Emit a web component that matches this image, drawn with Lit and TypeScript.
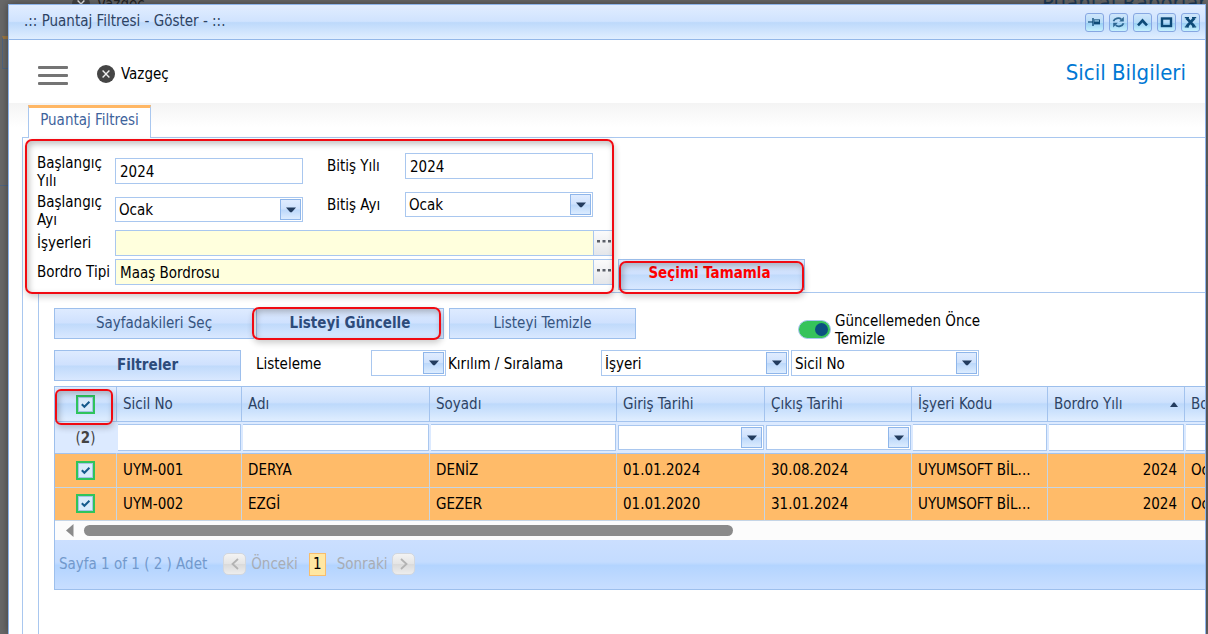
import { LitElement, html, css, svg, nothing } from "lit";
import { customElement, property, state } from "lit/decorators.js";

const controlStyles = css`
  * {
    box-sizing: border-box;
  }
  button,
  input,
  select {
    font: inherit;
    color: inherit;
    margin: 0;
    border-radius: 0;
  }
  input,
  select {
    border: 1px solid #a9c7ef;
    background: #fff;
    padding: 1px 4px 0;
    outline: none;
  }
`;

/** Drop-down list with a square arrow button at its right end. */
@customElement("drop-down")
class DropDown extends LitElement {
  @property() label = "";
  @property() value = "";

  static styles = [
    controlStyles,
    css`
      :host {
        display: block;
        position: relative;
        height: 26px;
      }
      select {
        appearance: none;
        display: block;
        width: 100%;
        height: 100%;
        padding: 1px 24px 0 3px;
      }
      .arrow {
        position: absolute;
        top: 2px;
        right: 2px;
        bottom: 2px;
        width: 21px;
        border: 1px solid #8fb6ea;
        background: linear-gradient(#e0ecff, #cfe2fd 48%, #bcd8fa 52%, #dcecff);
        display: grid;
        place-items: center;
        pointer-events: none;
      }
    `,
  ];

  render() {
    return html`
      <select aria-label=${this.label}>
        <option>${this.value}</option>
      </select>
      <span class="arrow">
        <svg width="10" height="6" viewBox="0 0 10 6">
          <path d="M0 .5H10L5.8 5.2H4.2Z" fill="#233c5e" />
        </svg>
      </span>
    `;
  }
}

interface Column {
  key: string;
  title: string;
  width: number;
  filter?: "text" | "date";
  numeric?: boolean;
  sorted?: boolean;
}

const COLUMNS: Column[] = [
  { key: "no", title: "Sicil No", width: 125 },
  { key: "name", title: "Adı", width: 188 },
  { key: "surname", title: "Soyadı", width: 187 },
  { key: "start", title: "Giriş Tarihi", width: 148, filter: "date" },
  { key: "end", title: "Çıkış Tarihi", width: 147, filter: "date" },
  { key: "place", title: "İşyeri Kodu", width: 136 },
  { key: "year", title: "Bordro Yılı", width: 137, numeric: true, sorted: true },
  { key: "month", title: "Bordro Ayı", width: 136 },
];

const ROWS: Record<string, string>[] = [
  { no: "UYM-001", name: "DERYA", surname: "DENİZ", start: "01.01.2024", end: "30.08.2024", place: "UYUMSOFT BİL...", year: "2024", month: "Ocak" },
  { no: "UYM-002", name: "EZGİ", surname: "GEZER", start: "01.01.2020", end: "31.01.2024", place: "UYUMSOFT BİL...", year: "2024", month: "Ocak" },
];

/** Employee list with a filter row, a scroll bar and a pager. */
@customElement("record-grid")
class RecordGrid extends LitElement {
  @state() private selected = new Set(ROWS.map((r) => r.no));

  static styles = [
    controlStyles,
    css`
      :host {
        display: block;
        border: 1px solid #9dbfec;
        border-right: 0;
        overflow: hidden;
      }
      table {
        table-layout: fixed;
        width: 1266px;
        border-spacing: 0;
      }
      th,
      td {
        padding: 0 6px;
        font-weight: normal;
        text-align: left;
        white-space: nowrap;
        overflow: hidden;
        border-right: 1px solid #a3c3ee;
        border-bottom: 1px solid #a3c3ee;
      }
      .head th {
        height: 35px;
        color: #2d4363;
        background: linear-gradient(#e1edff, #cde1fd 45%, #bdd9fb 50%, #e0eeff);
      }
      .head th.pick {
        position: relative;
        overflow: visible;
      }
      .title {
        display: flex;
        align-items: center;
        justify-content: space-between;
      }
      .filters td {
        height: 32px;
        padding: 0;
        background: #dceaff;
        border-right-color: #dceaff;
      }
      .filters input {
        display: block;
        width: calc(100% - 1px);
        margin-left: 1px;
        height: 27px;
        border-left: 0;
      }
      .filters drop-down {
        margin-left: 1px;
        height: 25px;
      }
      .filters td.count {
        text-align: center;
        color: #444;
      }
      .rows td {
        height: 33px;
        padding-bottom: 1px;
        background: #ffbb69;
        border-color: #c5d5e6;
      }
      .rows tr:first-child td {
        height: 34px;
      }
      .pick {
        text-align: center;
      }
      .rows .numeric {
        padding-right: 7px;
        text-align: right;
      }
      .check {
        appearance: none;
        display: inline-block;
        vertical-align: middle;
        width: 19px;
        height: 19px;
        padding: 0;
        border: 2px solid #2fc45c;
        background: #e3f1ff;
      }
      .check:checked {
        background: #e3f1ff
          url("data:image/svg+xml,%3Csvg xmlns='http://www.w3.org/2000/svg' viewBox='0 0 15 15'%3E%3Crect x='.5' y='.5' width='14' height='14' fill='%23d9ebfb' stroke='%23a3c4e4'/%3E%3Cpath d='M3.800 7.200L6.400 9.800L11.400 4.800' fill='none' stroke='%23155a8c' stroke-width='2'/%3E%3C/svg%3E")
          center / 15px 15px;
      }
      .mark {
        position: absolute;
        inset: 2px 3px -4px 0;
        border: 2px solid #f00a12;
        border-radius: 6px;
        box-shadow: 1px 3px 6px rgba(0, 0, 0, 0.2), inset 2px 3px 6px rgba(0, 0, 0, 0.25);
        pointer-events: none;
      }
      .scroll {
        display: flex;
        align-items: center;
        gap: 10px;
        height: 19px;
        padding-left: 11px;
        background: #fcfcfc;
      }
      .thumb {
        width: 57%;
        height: 11px;
        border-radius: 6px;
        background: #8b8b8b;
      }
      .pager {
        display: flex;
        align-items: center;
        height: 49px;
        padding: 0 4px 1px;
        color: #7299cc;
        background: linear-gradient(#cbdfff, #c4dcff 45%, #b3d4ff 52%, #c8deff);
      }
      .nav {
        display: flex;
        align-items: center;
        gap: 5px;
        padding: 0;
        border: 0;
        background: none;
        color: #a8adb5;
      }
      .prev {
        margin-left: 16px;
      }
      .chip {
        width: 23px;
        height: 22px;
        border: 1px solid #d3d7dd;
        border-radius: 5px;
        background: linear-gradient(#f3f3f3, #e4e4e4 50%, #dadada 52%, #ededed);
        display: grid;
        place-items: center;
      }
      .page {
        margin: 0 11px;
        width: 17px;
        height: 23px;
        border: 1px solid #f8bd6c;
        background: #ffe7a2;
        color: #000;
        line-height: 21px;
        text-align: center;
      }
    `,
  ];

  private toggleAll(e: Event) {
    const on = (e.target as HTMLInputElement).checked;
    this.selected = new Set(on ? ROWS.map((r) => r.no) : []);
  }

  private toggle(no: string) {
    const next = new Set(this.selected);
    next.has(no) ? next.delete(no) : next.add(no);
    this.selected = next;
  }

  render() {
    return html`
      <table>
        <colgroup>
          <col style="width:62px" />
          ${COLUMNS.map((c) => html`<col style="width:${c.width}px" />`)}
        </colgroup>
        <thead>
          <tr class="head">
            <th class="pick">
              <input class="check" type="checkbox" aria-label="Tümünü seç"
                .checked=${this.selected.size === ROWS.length} @change=${this.toggleAll} />
              <span class="mark"></span>
            </th>
            ${COLUMNS.map(
              (c) => html`<th scope="col">
                <span class="title">${c.title}
                  ${c.sorted
                    ? html`<svg width="8" height="5" viewBox="0 0 8 5"><path d="M0 5H8L4.6 .5H3.4Z" fill="#233c5e" /></svg>`
                    : nothing}
                </span>
              </th>`
            )}
          </tr>
          <tr class="filters">
            <td class="count">(<b>${this.selected.size}</b>)</td>
            ${COLUMNS.map(
              (c) => html`<td>
                ${c.filter === "date"
                  ? html`<drop-down .label=${c.title}></drop-down>`
                  : html`<input type="text" aria-label=${c.title} />`}
              </td>`
            )}
          </tr>
        </thead>
        <tbody class="rows">
          ${ROWS.map(
            (r) => html`<tr>
              <td class="pick">
                <input class="check" type="checkbox" aria-label=${r.no}
                  .checked=${this.selected.has(r.no)} @change=${() => this.toggle(r.no)} />
              </td>
              ${COLUMNS.map((c) => html`<td class=${c.numeric ? "numeric" : ""}>${r[c.key]}</td>`)}
            </tr>`
          )}
        </tbody>
      </table>
      <div class="scroll">
        <svg width="8" height="13" viewBox="0 0 8 13"><path d="M7.5 0V13L0 6.5Z" fill="#8b8b8b" /></svg>
        <span class="thumb"></span>
      </div>
      <div class="pager">
        <span>Sayfa 1 of 1 ( 2 ) Adet</span>
        <button class="nav prev" type="button">
          <span class="chip"><svg width="8" height="12" viewBox="0 0 8 12"><path d="M7 1L1.5 6L7 11" fill="none" stroke="#b3b3b3" stroke-width="1.8" /></svg></span>
          Önceki
        </button>
        <span class="page">1</span>
        <button class="nav" type="button">
          Sonraki
          <span class="chip"><svg width="8" height="12" viewBox="0 0 8 12"><path d="M1 1L6.5 6L1 11" fill="none" stroke="#b3b3b3" stroke-width="1.8" /></svg></span>
        </button>
      </div>
    `;
  }
}

const closeBadge = (size: number) => svg`
  <svg width=${size} height=${size} viewBox="0 0 18 18">
    <circle cx="9" cy="9" r="9" fill="#454545" />
    <path d="M5.6 5.6L12.4 12.4M12.4 5.6L5.6 12.4" stroke="#eee" stroke-width="1.4" />
  </svg>`;

const WINDOW_TOOLS = [
  {
    name: "Sabitle",
    icon: svg`<path d="M0 6H5" stroke="#0d4a77" stroke-width="1.2" fill="none"/><path d="M5 2V10" stroke="#0d4a77" stroke-width="1.4"/><path d="M6 3.4H12V8.4H6Z" fill="#0d4a77"/><path d="M6.400 4.900H11" stroke="#a9d8f4" stroke-width="1.200"/>`,
  },
  {
    name: "Yenile",
    icon: svg`<path d="M1.500 5.200C2.500 2.200 7 1 9.300 3.300M11.500 7.200C10.500 10.200 6 11.400 3.700 9.100" stroke="#2d6792" stroke-width="1.800" fill="none"/><path d="M11.800 .8V5.600H7.200ZM1.200 11.600V6.800H5.800Z" fill="#2d6792"/>`,
  },
  {
    name: "Daralt",
    icon: svg`<path d="M2 9.300L6.500 4.500L11 9.300" stroke="#0d4a77" stroke-width="2.600" fill="none"/>`,
  },
  {
    name: "Büyüt",
    icon: svg`<rect x="2" y="2.500" width="9" height="7.500" stroke="#0d4a77" stroke-width="2.400" fill="none"/>`,
  },
  {
    name: "Kapat",
    icon: svg`<path d="M2.500 2L10.500 10.500M10.500 2L2.500 10.500" stroke="#0d4a77" stroke-width="2.600" fill="none"/><path d="M.8 1.600H5M8 1.600H12.200M.8 10.900H5M8 10.900H12.200" stroke="#0d4a77" stroke-width="1.200"/>`,
  },
];

@customElement("app-root")
class AppRoot extends LitElement {
  static styles = [
    controlStyles,
    css`
      :host {
        display: block;
        position: relative;
        min-height: 100vh;
        overflow: hidden;
        background: #686868;
        color: #000;
        font-family: "DejaVu Sans Condensed", "Noto Sans", sans-serif;
        font-size: 15px;
        line-height: 18px;
      }
      .behind {
        position: absolute;
        inset: 0;
        color: #242424;
      }
      .behind-close {
        position: absolute;
        left: 72px;
        top: -5px;
        display: flex;
        gap: 7px;
      }
      .behind-title {
        position: absolute;
        left: 1042px;
        top: -10px;
        font-size: 22px;
        line-height: 26px;
        color: #1f3b57;
        white-space: nowrap;
      }
      .behind-tab {
        position: absolute;
        left: 2px;
        top: 36px;
        width: 40px;
        height: 33px;
        border: 1px solid #50647e;
        border-top: 3px solid #9b7743;
      }
      .behind-line {
        position: absolute;
        left: 0;
        top: 185px;
        width: 100%;
        border-top: 1px solid #50647e;
      }
      .window {
        position: relative;
        margin: 4px 2px 0 8px;
        min-height: calc(100vh - 4px);
        border: 1px solid #8db4ea;
        border-bottom: 0;
        background: #fff;
        box-shadow: 0 0 8px rgba(0, 0, 0, 0.4);
        overflow: hidden;
      }
      .titlebar {
        display: flex;
        align-items: center;
        justify-content: space-between;
        height: 35px;
        padding: 0 5px 0 15px;
        border-bottom: 1px solid #93b7e8;
        color: #2d4363;
        background: linear-gradient(#e1edff, #d0e3fe 48%, #bdd9fb 52%, #e0eeff);
      }
      .title {
        margin: 0;
        padding-bottom: 2px;
        font-size: 15px;
        font-weight: normal;
      }
      .tools {
        display: flex;
        gap: 5px;
      }
      .tool {
        width: 19px;
        height: 19px;
        padding: 0;
        border: 1px solid #86a7e2;
        border-radius: 3px;
        background: linear-gradient(#cfe6fb, #b5dbf8 50%, #9bd0f5 55%, #c6f1fd);
        display: grid;
        place-items: center;
      }
      .commands {
        display: flex;
        align-items: center;
        height: 63px;
        padding: 4px 19px 0 29px;
      }
      .menu,
      .cancel {
        padding: 0;
        border: 0;
        background: none;
        display: flex;
        align-items: center;
        gap: 6px;
      }
      .menu {
        flex-direction: column;
        gap: 5px;
        margin: 4px 29px 0 0;
      }
      .menu i {
        width: 30px;
        height: 3px;
        border-radius: 1px;
        background: #747474;
      }
      .heading {
        margin: 0 0 0 auto;
        padding-bottom: 2px;
        font-size: 22px;
        line-height: 28px;
        font-weight: normal;
        color: #0078d4;
      }
      .strip {
        height: 34px;
        padding: 2px 0 0 19px;
        background: linear-gradient(#f4f4f4, #fff 24px);
      }
      .tab {
        display: block;
        position: relative;
        width: 123px;
        height: 33px;
        padding: 0 0 6px;
        border: 1px solid #a9c7ef;
        border-top: 3px solid #ffb765;
        border-bottom: 0;
        background: #fff;
        color: #3e639c;
      }
      .panel {
        margin-left: 13px;
        border: 1px solid #a9c7ef;
        border-width: 1px 0 0 1px;
        min-height: calc(100vh - 137px);
      }
      .form {
        position: relative;
        display: grid;
        grid-template-columns: 78px 188px 24px 78px 188px 21px auto;
        grid-template-rows: 39px 38px 29px 31px;
        width: max-content;
        padding: 15px 0 2px 14px;
        align-items: start;
      }
      .form input {
        width: 100%;
        height: 26px;
      }
      .form drop-down {
        height: 25px;
      }
      .form label {
        line-height: 26px;
        white-space: nowrap;
      }
      .form .first {
        grid-column: 1;
      }
      .form .tall {
        line-height: 18px;
        white-space: normal;
        padding: 1px 8px 0 0;
      }
      .form .low {
        margin-top: 5px;
      }
      .second {
        grid-column: 4;
      }
      .lookup {
        grid-column: 2 / 7;
        display: flex;
        height: 26px;
      }
      .lookup input {
        flex: 1;
        min-width: 0;
        background: #ffffdd;
      }
      .more {
        width: 20px;
        padding: 0;
        border: 1px solid #a9c7ef;
        border-left: 0;
        background: linear-gradient(#fbfbfb, #e4e6ea);
        display: grid;
        place-items: center;
      }
      .action {
        height: 31px;
        width: 187px;
        padding: 0 0 1px;
        border: 1px solid #9dbfec;
        color: #36547f;
        background: linear-gradient(#deebff, #cfe1fe 48%, #c0dafb 52%, #d9e8ff);
        position: relative;
      }
      .strong {
        font-weight: bold;
        color: #2d4b7a;
      }
      .finish {
        margin-left: 4px;
        padding: 0 4px 3px 0;
        font-weight: bold;
        color: #f00;
      }
      .wide {
        width: 200px;
      }
      .mark {
        position: absolute;
        border: 2px solid #f00a12;
        border-radius: 7px;
        box-shadow: 1px 3px 6px rgba(0, 0, 0, 0.2), inset 2px 3px 6px rgba(0, 0, 0, 0.25);
        pointer-events: none;
      }
      .mark-form {
        left: 2px;
        top: 1px;
        bottom: -2px;
        width: 589px;
      }
      .mark-finish {
        inset: 1px 0 -5px 0;
      }
      .mark-refresh {
        inset: -2px 2px -2px -5px;
      }
      .list {
        margin-left: 15px;
        padding: 15px 0 0 15px;
        border: 1px solid #a9c7ef;
        border-width: 1px 0 0 1px;
        min-height: calc(100vh - 292px);
      }
      .bar {
        display: flex;
        align-items: flex-start;
      }
      .bar .clear {
        margin-left: 5px;
      }
      .bar .refresh {
        margin-left: 2px;
        width: 188px;
      }
      .switch {
        display: flex;
        align-items: center;
        gap: 4px;
        width: 190px;
        height: 36px;
        margin: 4px 0 2px 162px;
      }
      .switch input {
        appearance: none;
        flex: none;
        width: 33px;
        height: 19px;
        margin-bottom: 2px;
        padding: 2px;
        border-radius: 10px;
        background: #c9ced6;
        display: flex;
      }
      .switch input::before {
        content: "";
        width: 13px;
        height: 13px;
        border-radius: 7px;
        background: #0b5080;
      }
      .switch input:checked {
        background: #35c35b;
        justify-content: flex-end;
      }
      .options label {
        line-height: 28px;
      }
      .options .listing {
        width: 115px;
        margin-left: 15px;
      }
      .options .order {
        width: 153px;
        margin-left: 2px;
      }
      .small {
        width: 75px;
      }
      .medium {
        width: 188px;
      }
      .next {
        margin-left: 2px;
      }
      record-grid {
        margin-top: 5px;
      }
    `,
  ];

  private renderMore(name: string) {
    return html`<button class="more" type="button" aria-label=${name}>
      <svg width="14" height="10" viewBox="0 0 14 10"><path d="M0 2H3V4.500H0ZM5.500 2H8.500V4.500H5.500ZM11 2H14V4.500H11Z" fill="#5a5f68" /></svg>
    </button>`;
  }

  render() {
    return html`
      <div class="behind" aria-hidden="true">
        <span class="behind-close">${closeBadge(18)} Vazgeç</span>
        <span class="behind-title">Puantaj Raporları</span>
        <span class="behind-tab"></span>
        <span class="behind-line"></span>
      </div>
      <main class="window">
        <header class="titlebar">
          <h1 class="title">.:: Puantaj Filtresi - Göster - ::.</h1>
          <div class="tools">
            ${WINDOW_TOOLS.map(
              (t) => html`<button class="tool" type="button" aria-label=${t.name}>
                <svg width="13" height="13" viewBox="0 0 13 13">${t.icon}</svg>
              </button>`
            )}
          </div>
        </header>
        <div class="commands">
          <button class="menu" type="button" aria-label="Menü"><i></i><i></i><i></i></button>
          <button class="cancel" type="button">${closeBadge(18)} Vazgeç</button>
          <h2 class="heading">Sicil Bilgileri</h2>
        </div>
        <div class="strip"><button class="tab" type="button">Puantaj Filtresi</button></div>
        <section class="panel">
          <form class="form">
            <label class="first tall" for="y1">Başlangıç Yılı</label>
            <input class="low" id="y1" type="text" value="2024" />
            <label class="second" for="y2">Bitiş Yılı</label>
            <input id="y2" type="text" value="2024" />
            <label class="first tall" for="m1">Başlangıç Ayı</label>
            <drop-down class="low" id="m1" label="Başlangıç Ayı" value="Ocak"></drop-down>
            <label class="second" for="m2">Bitiş Ayı</label>
            <drop-down id="m2" label="Bitiş Ayı" value="Ocak"></drop-down>
            <label class="first" for="places">İşyerleri</label>
            <span class="lookup"><input id="places" type="text" />${this.renderMore("İşyerleri seç")}</span>
            <label class="first" for="kind">Bordro Tipi</label>
            <span class="lookup"><input id="kind" type="text" value="Maaş Bordrosu" />${this.renderMore("Bordro Tipi seç")}</span>
            <button class="action finish" type="button">Seçimi Tamamla<span class="mark mark-finish"></span></button>
            <span class="mark mark-form"></span>
          </form>
          <div class="list">
            <div class="bar">
              <button class="action wide" type="button">Sayfadakileri Seç</button>
              <button class="action strong refresh" type="button">Listeyi Güncelle<span class="mark mark-refresh"></span></button>
              <button class="action clear" type="button">Listeyi Temizle</button>
              <label class="switch"><input type="checkbox" role="switch" checked /><span>Güncellemeden Önce Temizle</span></label>
            </div>
            <div class="bar options">
              <button class="action strong" type="button">Filtreler</button>
              <label class="listing" for="l1">Listeleme</label>
              <drop-down class="small" id="l1" label="Listeleme"></drop-down>
              <label class="order" for="o1">Kırılım / Sıralama</label>
              <drop-down class="medium" id="o1" label="Kırılım" value="İşyeri"></drop-down>
              <drop-down class="medium next" label="Sıralama" value="Sicil No"></drop-down>
            </div>
            <record-grid></record-grid>
          </div>
        </section>
      </main>
    `;
  }
}
